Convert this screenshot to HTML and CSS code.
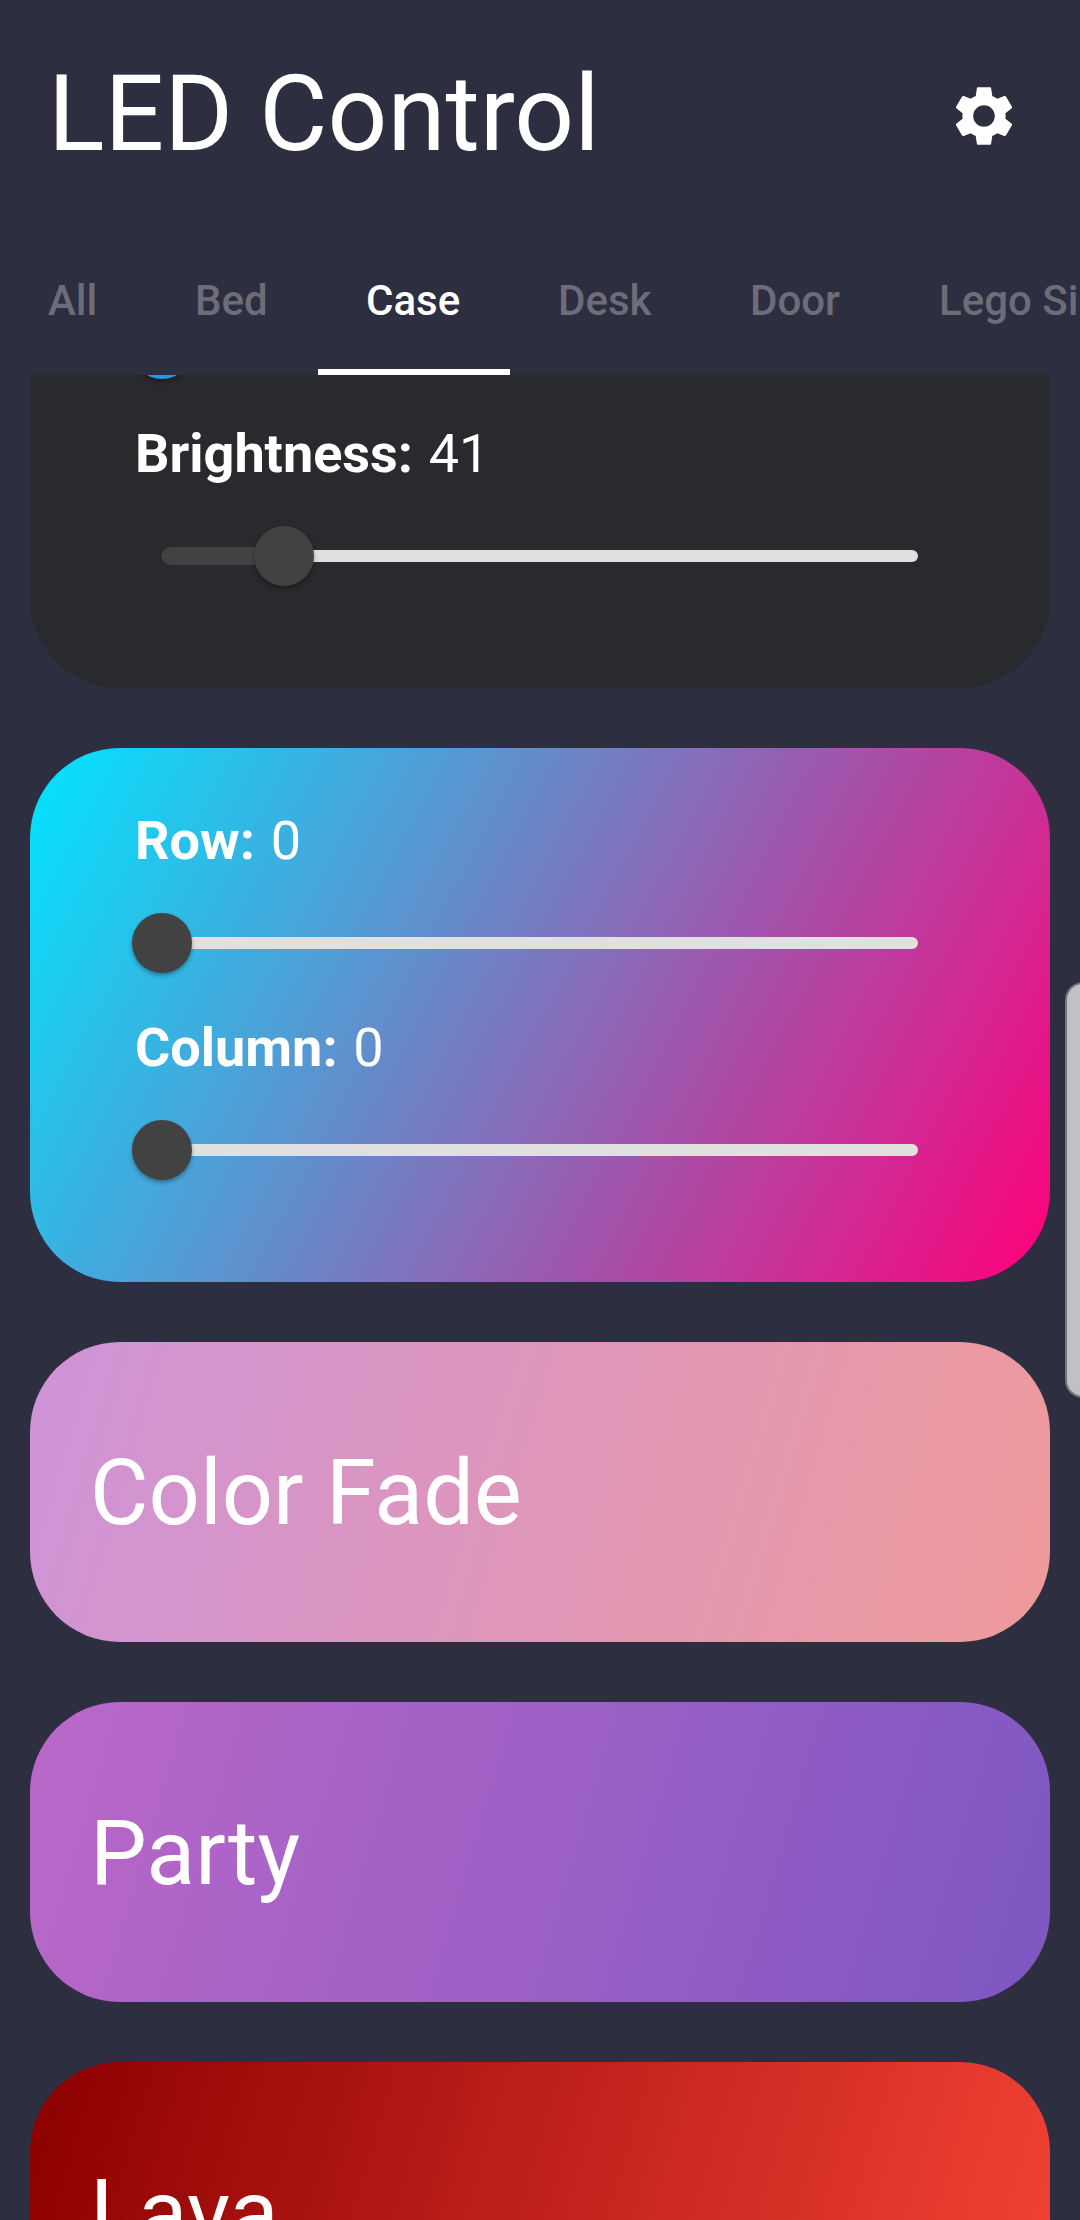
FILE: index.html
```html
<!DOCTYPE html>
<html lang="en">
<head>
<meta charset="utf-8">
<title>LED Control</title>
<link rel="stylesheet" href="styles.css">
</head>
<body>
<div class="app">
  <header class="header">
    <h1 class="title">LED Control</h1>
    <button class="settings" aria-label="Settings">
      <svg viewBox="0 0 24 24" width="72" height="72" fill="currentColor"><path d="M19.14 12.94c.04-.3.06-.61.06-.94 0-.32-.02-.64-.07-.94l2.03-1.58c.18-.14.23-.41.12-.61l-1.92-3.32c-.12-.22-.37-.29-.59-.22l-2.39.96c-.5-.38-1.03-.7-1.62-.94l-.36-2.54c-.04-.24-.24-.41-.48-.41h-3.84c-.24 0-.43.17-.47.41l-.36 2.54c-.59.24-1.13.57-1.62.94l-2.39-.96c-.22-.08-.47 0-.59.22L2.74 8.87c-.12.21-.08.47.12.61l2.03 1.58c-.05.3-.09.63-.09.94s.02.64.07.94l-2.03 1.58c-.18.14-.23.41-.12.61l1.92 3.32c.12.22.37.29.59.22l2.39-.96c.5.38 1.03.7 1.62.94l.36 2.54c.05.24.24.41.48.41h3.84c.24 0 .44-.17.47-.41l.36-2.54c.59-.24 1.13-.56 1.62-.94l2.39.96c.22.08.47 0 .59-.22l1.92-3.32c.12-.22.07-.47-.12-.61l-2.01-1.58zM12 15.6c-1.98 0-3.6-1.62-3.6-3.6s1.62-3.6 3.6-3.6 3.6 1.62 3.6 3.6-1.62 3.6-3.6 3.6z"/></svg>
    </button>
  </header>
  <nav class="tabs">
    <a class="tab">All</a>
    <a class="tab">Bed</a>
    <a class="tab tab-active">Case</a>
    <a class="tab">Desk</a>
    <a class="tab">Door</a>
    <a class="tab">Lego Si</a>
  </nav>
  <main class="list">
    <section class="card controls controls-dark">
      <div class="slider"><div class="track"><div class="thumb thumb-blue"></div></div></div>
      <div class="label"><b class="name">Brightness:</b><span>41</span></div>
      <div class="slider"><div class="track"><div class="fill" style="width:16.08%"></div><div class="thumb" style="left:16.08%"></div></div></div>
    </section>
    <section class="card controls controls-grid">
      <div class="label"><b class="name">Row:</b><span>0</span></div>
      <div class="slider"><div class="track"><div class="thumb"></div></div></div>
      <div class="label"><b class="name">Column:</b><span>0</span></div>
      <div class="slider"><div class="track"><div class="thumb"></div></div></div>
    </section>
    <section class="card effect effect-fade">Color Fade</section>
    <section class="card effect effect-party">Party</section>
    <section class="card effect effect-lava">Lava</section>
  </main>
  <div class="edge-handle"></div>
</div>
</body>
</html>
```
FILE: styles.css
```css
* { box-sizing: border-box; }

body {
  margin: 0;
  background: #2d2e40;
  color: #fff;
  font-family: Roboto, sans-serif;
}

.app {
  position: relative;
  display: flex;
  flex-direction: column;
  width: 1080px;
  height: 2220px;
  overflow: hidden;
}

.header {
  flex: none;
  display: flex;
  align-items: center;
  justify-content: space-between;
  height: 231px;
  padding: 0 48px;
}

.title {
  margin: 0;
  padding-bottom: 2px;
  font-size: 105px;
  font-weight: 400;
  line-height: 123px;
}

.settings {
  display: flex;
  margin-top: 1px;
  padding: 0 12px;
  border: 0;
  background: none;
  color: #fff;
}

.tabs {
  flex: none;
  display: grid;
  grid-template-columns: 147px 171px 192px 192px 189px 1fr;
  height: 144px;
  overflow: hidden;
}

.tab {
  height: 144px;
  padding-left: 48px;
  border-bottom: 6px solid transparent;
  color: #6c6d79;
  font-size: 42px;
  font-weight: 500;
  line-height: 139px;
  white-space: nowrap;
}

.tab-active {
  border-color: #fff;
  color: #fff;
}

.list {
  flex: 1;
  display: flex;
  flex-direction: column;
  gap: 60px;
  min-height: 0;
  padding: 0 30px;
  overflow: hidden;
}

.card {
  flex: none;
  border-radius: 90px;
}

.controls { padding: 60px 105px; }

.controls-dark {
  height: 471px;
  margin-top: -158px;
  background: #292a2d;
}

.controls-grid {
  height: 534px;
  background: linear-gradient(117.63deg, #00e5ff, #ff007a);
}

.label {
  display: flex;
  gap: 15.7px;
  height: 63px;
  font-size: 54px;
  font-weight: 400;
  line-height: 65px;
}

.name { font-weight: 700; }

.slider {
  display: flex;
  align-items: center;
  height: 144px;
  padding: 0 27px;
}

.track {
  position: relative;
  flex: 1;
  height: 12px;
  border-radius: 6px;
  background: #e0e0e0;
}

.fill {
  position: absolute;
  top: -3px;
  left: 0;
  height: 18px;
  border-radius: 9px 0 0 9px;
  background: #424242;
}

.thumb {
  position: absolute;
  top: -24px;
  left: 0;
  width: 60px;
  height: 60px;
  margin-left: -30px;
  border-radius: 50%;
  background: #424242;
  box-shadow: 0 3px 4px rgba(0, 0, 0, .25), 0 1px 3px rgba(0, 0, 0, .12);
}

.thumb-blue { background: #2196f3; }

.effect {
  height: 300px;
  padding: 0 60px;
  font-size: 90px;
  line-height: 303px;
}

.effect-fade { background: linear-gradient(106.39deg, #ce93d8, #ef9a9a); }
.effect-party { background: linear-gradient(106.39deg, #ba68c8, #7e57c2); }
.effect-lava { background: linear-gradient(106.39deg, #8b0000, #f44336); }

.edge-handle {
  position: absolute;
  top: 982px;
  right: -24px;
  width: 39px;
  height: 416px;
  border: 2px solid #75757d;
  border-radius: 18px;
  background: #c1c0c6;
}
```
